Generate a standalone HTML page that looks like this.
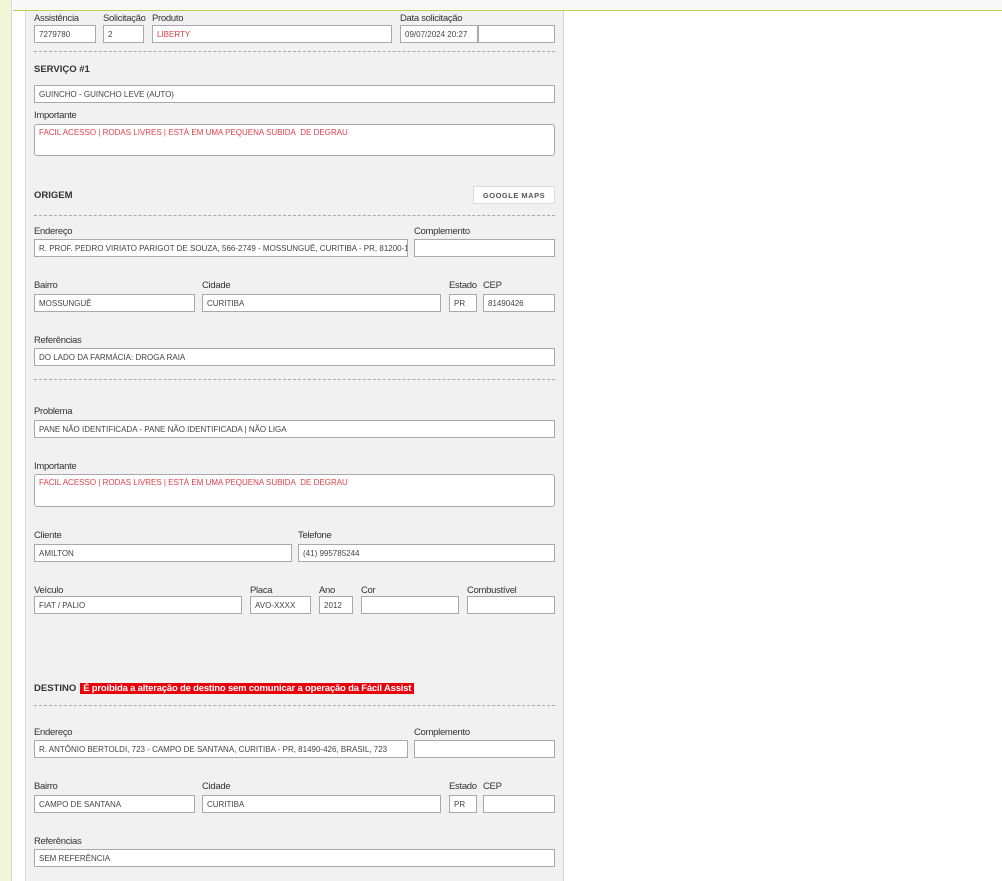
<!DOCTYPE html>
<html><head><meta charset="utf-8"><style>
*{margin:0;padding:0;box-sizing:border-box}
body{width:1002px;height:881px;position:relative;background:#fff;font-family:"Liberation Sans",Arial,sans-serif;overflow:hidden}
.strip{position:absolute;left:0;top:0;width:12px;height:881px;background:#f1f7d6;border-right:1px solid #d8dcc8}
.top{position:absolute;left:13px;top:0;width:989px;height:11px;background:#f8f8f8;border-bottom:1px solid #bccf55}
.panel{position:absolute;left:25px;top:11px;width:539px;height:870px;background:#f1f1f1;border-left:1px solid #dcdcdc;border-right:1px solid #d4d4d4}
.l{position:absolute;font-size:9.5px;color:#333;letter-spacing:-0.3px}
.i{position:absolute;height:18px;background:#fff;border:1px solid #a9a9a9;font-size:8px;color:#444;padding:4px 0 0 4px;white-space:nowrap;overflow:hidden}
.r{color:#e0404a}
.ta{border-radius:3px}
.h{position:absolute;font-size:9.5px;font-weight:bold;color:#333}
.d{position:absolute;left:34px;width:521px;border-top:1px dashed #aaa}
.btn{position:absolute;left:473px;top:186px;width:82px;height:18px;background:#fff;border:1px solid #ddd;font-size:7.5px;font-weight:bold;color:#555;text-align:center;line-height:17px;letter-spacing:0.5px}
.warn{background:#e8000b;color:#fff;padding:0 3px;margin-left:4px;font-weight:bold;letter-spacing:-0.2px}
</style></head><body>
<div class="strip"></div><div class="top"></div><div class="panel"></div>

<div class="l" style="left:34px;top:13px">Assistência</div>
<div class="l" style="left:103px;top:13px">Solicitação</div>
<div class="l" style="left:152px;top:13px">Produto</div>
<div class="l" style="left:400px;top:13px">Data solicitação</div>
<div class="i" style="left:34px;top:25px;width:62px">7279780</div>
<div class="i" style="left:103px;top:25px;width:41px">2</div>
<div class="i r" style="left:152px;top:25px;width:240px">LIBERTY</div>
<div class="i" style="left:400px;top:25px;width:78px">09/07/2024 20:27</div>
<div class="i" style="left:478px;top:25px;width:77px"></div>
<div class="d" style="top:51px"></div>

<div class="h" style="left:34px;top:64px">SERVIÇO #1</div>
<div class="i" style="left:34px;top:85px;width:521px">GUINCHO - GUINCHO LEVE (AUTO)</div>
<div class="l" style="left:34px;top:110px">Importante</div>
<div class="i r ta" style="left:34px;top:124px;width:521px;height:32px;padding-top:3px">FACIL ACESSO | RODAS LIVRES | ESTÁ EM UMA PEQUENA SUBIDA&nbsp; DE DEGRAU</div>

<div class="h" style="left:34px;top:190px">ORIGEM</div>
<div class="btn">GOOGLE MAPS</div>
<div class="d" style="top:215px"></div>
<div class="l" style="left:34px;top:226px">Endereço</div>
<div class="l" style="left:414px;top:226px">Complemento</div>
<div class="i" style="left:34px;top:239px;width:374px">R. PROF. PEDRO VIRIATO PARIGOT DE SOUZA, 566-2749 - MOSSUNGUÊ, CURITIBA - PR, 81200-100, BRASIL</div>
<div class="i" style="left:414px;top:239px;width:141px"></div>
<div class="l" style="left:34px;top:280px">Bairro</div>
<div class="l" style="left:202px;top:280px">Cidade</div>
<div class="l" style="left:449px;top:280px">Estado</div>
<div class="l" style="left:483px;top:280px">CEP</div>
<div class="i" style="left:34px;top:294px;width:161px">MOSSUNGUÊ</div>
<div class="i" style="left:202px;top:294px;width:239px">CURITIBA</div>
<div class="i" style="left:449px;top:294px;width:28px">PR</div>
<div class="i" style="left:483px;top:294px;width:72px">81490426</div>
<div class="l" style="left:34px;top:335px">Referências</div>
<div class="i" style="left:34px;top:348px;width:521px">DO LADO DA FARMÁCIA: DROGA RAIA</div>
<div class="d" style="top:379px"></div>

<div class="l" style="left:34px;top:406px">Problema</div>
<div class="i" style="left:34px;top:420px;width:521px">PANE NÃO IDENTIFICADA - PANE NÃO IDENTIFICADA | NÃO LIGA</div>
<div class="l" style="left:34px;top:461px">Importante</div>
<div class="i r ta" style="left:34px;top:474px;width:521px;height:33px;padding-top:3px">FACIL ACESSO | RODAS LIVRES | ESTÁ EM UMA PEQUENA SUBIDA&nbsp; DE DEGRAU</div>
<div class="l" style="left:34px;top:530px">Cliente</div>
<div class="l" style="left:298px;top:530px">Telefone</div>
<div class="i" style="left:34px;top:544px;width:258px">AMILTON</div>
<div class="i" style="left:298px;top:544px;width:257px">(41) 995785244</div>
<div class="l" style="left:34px;top:585px">Veículo</div>
<div class="l" style="left:250px;top:585px">Placa</div>
<div class="l" style="left:319px;top:585px">Ano</div>
<div class="l" style="left:361px;top:585px">Cor</div>
<div class="l" style="left:467px;top:585px">Combustível</div>
<div class="i" style="left:34px;top:596px;width:208px">FIAT / PALIO</div>
<div class="i" style="left:250px;top:596px;width:61px">AVO-XXXX</div>
<div class="i" style="left:319px;top:596px;width:34px">2012</div>
<div class="i" style="left:361px;top:596px;width:98px"></div>
<div class="i" style="left:467px;top:596px;width:88px"></div>

<div class="h" style="left:34px;top:683px">DESTINO<span class="warn">É proibida a alteração de destino sem comunicar a operação da Fácil Assist</span></div>
<div class="d" style="top:705px"></div>
<div class="l" style="left:34px;top:727px">Endereço</div>
<div class="l" style="left:414px;top:727px">Complemento</div>
<div class="i" style="left:34px;top:740px;width:374px">R. ANTÔNIO BERTOLDI, 723 - CAMPO DE SANTANA, CURITIBA - PR, 81490-426, BRASIL, 723</div>
<div class="i" style="left:414px;top:740px;width:141px"></div>
<div class="l" style="left:34px;top:781px">Bairro</div>
<div class="l" style="left:202px;top:781px">Cidade</div>
<div class="l" style="left:449px;top:781px">Estado</div>
<div class="l" style="left:483px;top:781px">CEP</div>
<div class="i" style="left:34px;top:795px;width:161px">CAMPO DE SANTANA</div>
<div class="i" style="left:202px;top:795px;width:239px">CURITIBA</div>
<div class="i" style="left:449px;top:795px;width:28px">PR</div>
<div class="i" style="left:483px;top:795px;width:72px"></div>
<div class="l" style="left:34px;top:836px">Referências</div>
<div class="i" style="left:34px;top:849px;width:521px">SEM REFERÊNCIA</div>
</body></html>
